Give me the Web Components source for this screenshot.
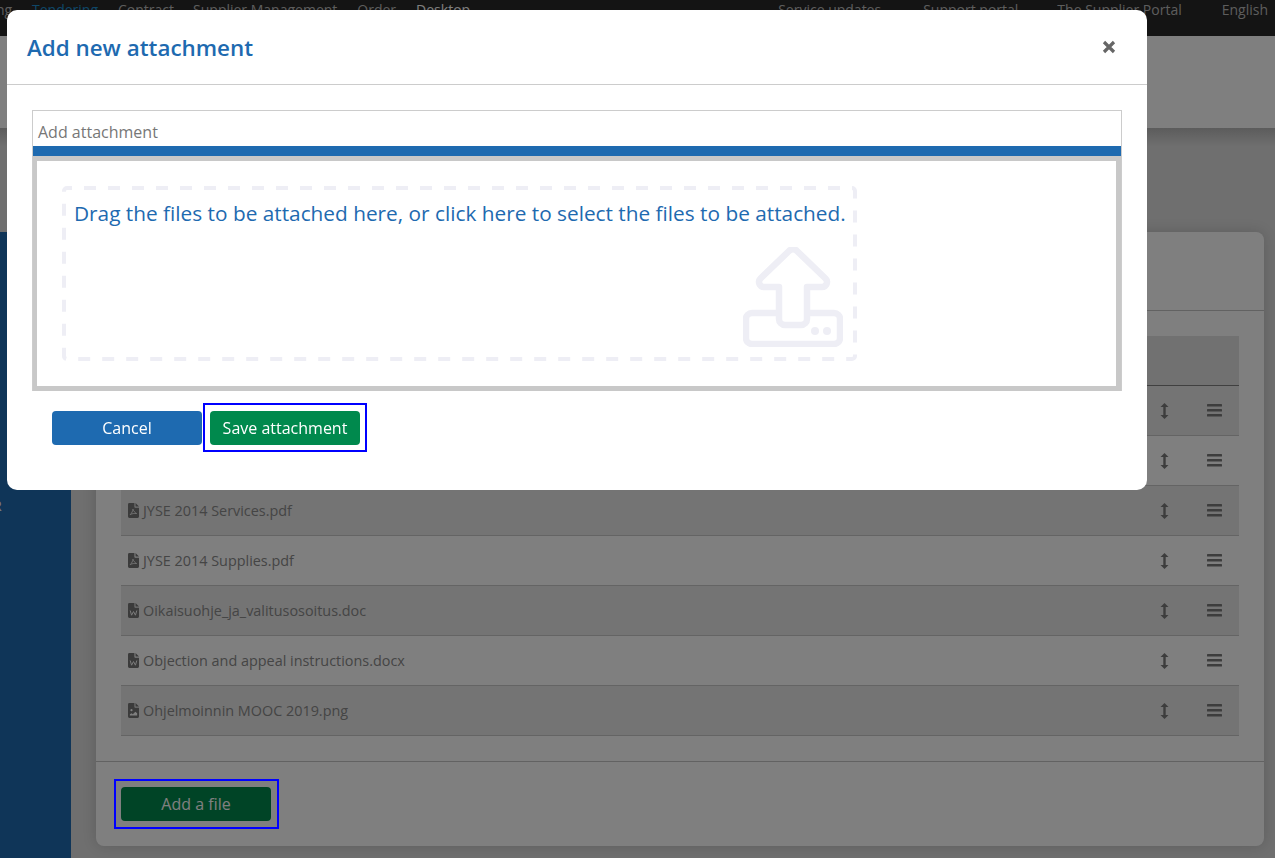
<!DOCTYPE html>
<html lang="en">
<head>
<meta charset="utf-8">
<title>Add new attachment</title>
<style>
  html, body { margin: 0; height: 100%; }
  body { font-family: "Open Sans", "Liberation Sans", sans-serif; overflow: hidden; background: #dedede; }
</style>
</head>
<body>
<app-page>
  <top-nav slot="nav"></top-nav>
  <side-bar slot="side"></side-bar>
  <file-card slot="main">
    <file-row></file-row>
    <file-row></file-row>
    <file-row type="pdf" name="JYSE 2014 Services.pdf"></file-row>
    <file-row type="pdf" name="JYSE 2014 Supplies.pdf"></file-row>
    <file-row type="doc" name="Oikaisuohje_ja_valitusosoitus.doc"></file-row>
    <file-row type="doc" name="Objection and appeal instructions.docx"></file-row>
    <file-row type="img" name="Ohjelmoinnin MOOC 2019.png"></file-row>
  </file-card>
</app-page>
<modal-layer>
  <attachment-dialog></attachment-dialog>
</modal-layer>

<script>
const fileSheet = 'M1.500 0H7v4.200c0 .5.3.8.8.8H12v9.500a1.500 1.500 0 0 1-1.500 1.500h-9A1.500 1.500 0 0 1 0 14.500v-13A1.500 1.500 0 0 1 1.500 0zM8.200 0L12 3.800H8.200z';
const fileIcons = {
  pdf: `<path fill-rule="evenodd" d="${fileSheet}"/><path d="M5.400 6.600c-.2 1.800-1.200 4.200-3 5.800 1.800-1 4.600-1.600 7-1.200-1.700-.8-3.400-2.600-4-4.600z" fill="none" stroke="#fff" stroke-width=".8"/>`,
  doc: `<path fill-rule="evenodd" d="${fileSheet}"/><path d="M2.400 8l1.500 5 2.100-3.900L8.100 13l1.500-5" fill="none" stroke="#fff" stroke-width="1"/>`,
  img: `<path fill-rule="evenodd" d="${fileSheet}"/><circle cx="3.800" cy="7.600" r="1.200" fill="#fff"/><path d="M2 13.400l.1-1.400 1.700-1 1.500 1 2.700-2.800L10 10.800v2.600z" fill="#fff"/>`
};

class AppPage extends HTMLElement {
  constructor() {
    super();
    this.attachShadow({ mode: 'open' }).innerHTML = `
      <style>
        :host { display: flex; flex-direction: column; height: 858px; background: #dedede; }
        .band { height: 92px; background: #fff; flex: none; }
        .body { flex: 1; min-height: 0; display: flex; flex-direction: column;
                background: linear-gradient(#b8b8b8, #dedede 18px); }
        .title { height: 104px; flex: none; }
        .cols { flex: 1; min-height: 0; display: flex; }
        ::slotted([slot="side"]) { width: 71px; flex: none; }
        .main { flex: 1; min-width: 0; padding: 0 11px 12px 25px; display: flex; }
      </style>
      <slot name="nav"></slot>
      <div class="band"></div>
      <div class="body">
        <div class="title"></div>
        <div class="cols">
          <slot name="side"></slot>
          <div class="main"><slot name="main"></slot></div>
        </div>
      </div>`;
  }
}

class TopNav extends HTMLElement {
  constructor() {
    super();
    this.attachShadow({ mode: 'open' }).innerHTML = `
      <style>
        :host { display: flex; height: 36px; background: #282828; color: #bbb; font-size: 14px;
                line-height: 19px; overflow: hidden; flex: none; }
        span { white-space: nowrap; }
        .left { display: flex; }
        .right { margin-left: auto; display: flex; }
        .on { color: #1e8fd0; }
        .cur { color: #fff; }
      </style>
      <div class="left">
        <span style="width:36px;margin-left:-4px;text-align:right;padding-right:20px;box-sizing:border-box">ng</span>
        <span class="on" style="margin-right:20px">Tendering</span>
        <span style="margin-right:19px">Contract</span>
        <span style="margin-right:20px">Supplier Management</span>
        <span style="margin-right:20px">Order</span>
        <span class="cur">Desktop</span>
      </div>
      <div class="right">
        <span style="margin-right:42px">Service updates</span>
        <span style="margin-right:39px">Support portal</span>
        <span style="margin-right:40px">The Supplier Portal</span>
        <span style="margin-right:7px">English</span>
      </div>`;
  }
}

class SideBar extends HTMLElement {
  constructor() {
    super();
    this.attachShadow({ mode: 'open' }).innerHTML = `
      <style>
        :host { display: block; background: #1e6ab0; color: #fff; overflow: hidden; }
        div { margin: 264px 0 0 -7px; font-size: 14px; line-height: 19px; }
      </style>
      <div>R</div>`;
  }
}

class FileCard extends HTMLElement {
  constructor() {
    super();
    this.attachShadow({ mode: 'open' }).innerHTML = `
      <style>
        :host { flex: 1; min-width: 0; display: flex; flex-direction: column; background: #fff;
                border-radius: 8px; box-shadow: 0 0 14px rgba(0,0,0,.16); }
        .head { height: 78px; border-bottom: 1px solid #c4c4c4; flex: none; }
        .table { flex: 1; padding: 25px 25px 0; display: flex; flex-direction: column; }
        .thead { height: 49px; background: #e2e2e2; border-bottom: 1px solid #808080; flex: none; }
        .foot { border-top: 1px solid #c4c4c4; padding: 25px; height: 85px; box-sizing: border-box; flex: none; }
      </style>
      <div class="head"></div>
      <div class="table">
        <div class="thead"></div>
        <slot></slot>
      </div>
      <div class="foot"><app-button color="#00894d">Add a file</app-button></div>`;
  }
}

class FileRow extends HTMLElement {
  constructor() {
    super();
    this.attachShadow({ mode: 'open' });
  }

  connectedCallback() {
    const type = this.getAttribute('type');
    const name = this.getAttribute('name') || '';
    const icon = type
      ? `<svg class="file" width="11" height="15" viewBox="0 0 12 16" preserveAspectRatio="none" fill="#767676">${fileIcons[type]}</svg>`
      : '';
    this.shadowRoot.innerHTML = `
      <style>
        :host { display: flex; align-items: center; height: 50px; box-sizing: border-box;
                border-bottom: 1px solid #c8c8c8; padding-left: 7px; background: #fff;
                color: #8a8a8a; font-size: 14.4px; }
        :host(:nth-child(odd)) { background: #e8e8e8; }
        .file { margin-right: 4px; flex: none; }
        .name { flex: 1; white-space: nowrap; }
        .move { flex: none; margin-right: 38px; }
        .menu { flex: none; margin-right: 17px; }
      </style>
      ${icon}<span class="name">${name}</span>
      <svg class="move" width="9" height="16" viewBox="0 0 9 16" fill="#7a7a7a"><path d="M4.500 0L8.500 4H5.700v8h2.800l-4 4-4-4h2.800V4H.500z"/></svg>
      <svg class="menu" width="15" height="13" viewBox="0 0 15 13" fill="#7a7a7a"><rect y="0" width="15" height="2.600" rx=".6"/><rect y="5" width="15" height="2.600" rx=".6"/><rect y="10" width="15" height="2.600" rx=".6"/></svg>`;
  }
}

class AppButton extends HTMLElement {
  constructor() {
    super();
    this.attachShadow({ mode: 'open' }).innerHTML = `
      <style>
        :host { display: inline-flex; align-items: center; justify-content: center; width: 150px; height: 34px;
                border-radius: 4px; color: #fff; font-size: 16px; line-height: 22px; background: var(--bg); }
      </style>
      <slot></slot>`;
  }

  connectedCallback() {
    this.style.setProperty('--bg', this.getAttribute('color'));
  }
}

class ModalLayer extends HTMLElement {
  constructor() {
    super();
    this.attachShadow({ mode: 'open' }).innerHTML = `
      <style>
        :host { position: fixed; inset: 0; background: rgba(0,0,0,.5); display: block; }
        .ring { position: absolute; left: 114px; top: 779px; width: 161px; height: 46px; border: 2px solid #00f; }
      </style>
      <slot></slot>
      <div class="ring"></div>`;
  }
}

class AttachmentDialog extends HTMLElement {
  constructor() {
    super();
    this.attachShadow({ mode: 'open' }).innerHTML = `
      <style>
        :host { position: absolute; left: 7px; top: 10px; width: 1140px; height: 480px; background: #fff;
                border-radius: 10px; display: flex; flex-direction: column; }
        header { height: 74px; border-bottom: 1px solid #ccc; display: flex; align-items: center;
                 padding: 0 30px 0 20px; flex: none; }
        h1 { margin: 2px 0 0; flex: 1; font-size: 22.400px; line-height: 30px; font-weight: 600; color: #1e6ab0; }
        .close { width: 16px; height: 16px; display: block; margin-bottom: 1px; }
        .content { padding: 25px 25px 0; }
        .footer { display: flex; align-items: center; padding: 12px 0 0 45px; }
        .focus { border: 2px solid #00f; padding: 6px 5px 5px 5px; margin-left: 1px; display: flex; }
      </style>
      <header>
        <h1>Add new attachment</h1>
        <svg class="close" viewBox="0 0 16 16"><path d="M3 3l10 10M13 3L3 13" stroke="#666" stroke-width="3.200"/></svg>
      </header>
      <div class="content"><drop-zone></drop-zone></div>
      <div class="footer">
        <app-button color="#1e6ab0">Cancel</app-button>
        <div class="focus"><app-button color="#00894d">Save attachment</app-button></div>
      </div>`;
  }
}

class DropZone extends HTMLElement {
  constructor() {
    super();
    this.attachShadow({ mode: 'open' }).innerHTML = `
      <style>
        :host { display: block; border: 1px solid #ccc; border-bottom: 0; width: 1088px; }
        .label { height: 35px; padding-left: 5px; font-size: 16px; line-height: 43px; color: #777; overflow: hidden; }
        .bar { height: 10px; background: #1e6ab0; }
        .well { border: 5px solid #c8c8c8; border-left-width: 4px; height: 200px; padding: 25px 0 0 25px; background: #fff; }
        .dash { position: relative; box-sizing: border-box; width: 795px; height: 175px;
                padding: 13px 12px; color: #1e6ab0; font-size: 20.800px; line-height: 28px; white-space: nowrap; }
        .border { position: absolute; inset: 0; }
        .upload { position: absolute; right: 14px; bottom: 14px; }
      </style>
      <div class="label">Add attachment</div>
      <div class="bar"></div>
      <div class="well">
        <div class="dash">Drag the files to be attached here, or click here to select the files to be attached.
          <svg class="border" width="795" height="175" fill="none"><rect x="2" y="2" width="791" height="171" rx="3" stroke="#eeeef5" stroke-width="4" stroke-dasharray="12 12" stroke-dashoffset="7"/></svg>
          <svg class="upload" width="100" height="100" viewBox="0 0 100 100" fill="none" stroke="#eeeef5" stroke-width="6.500" stroke-linejoin="round">
            <path d="M36 40H21a5 5 0 0 1-3.500-8.500L46 4a5.500 5.500 0 0 1 8 0l28.500 27.500A5 5 0 0 1 79 40H64v32a6 6 0 0 1-6 6H42a6 6 0 0 1-6-6z"/>
            <path d="M33 66H9a6 6 0 0 0-6 6v19a6 6 0 0 0 6 6h82a6 6 0 0 0 6-6V72a6 6 0 0 0-6-6H67"/>
            <circle cx="72" cy="84" r="4" fill="#eeeef5" stroke="none"/>
            <circle cx="84" cy="84" r="4" fill="#eeeef5" stroke="none"/>
          </svg>
        </div>
      </div>`;
  }
}

customElements.define('app-page', AppPage);
customElements.define('top-nav', TopNav);
customElements.define('side-bar', SideBar);
customElements.define('file-card', FileCard);
customElements.define('file-row', FileRow);
customElements.define('app-button', AppButton);
customElements.define('modal-layer', ModalLayer);
customElements.define('attachment-dialog', AttachmentDialog);
customElements.define('drop-zone', DropZone);
</script>
</body>
</html>
